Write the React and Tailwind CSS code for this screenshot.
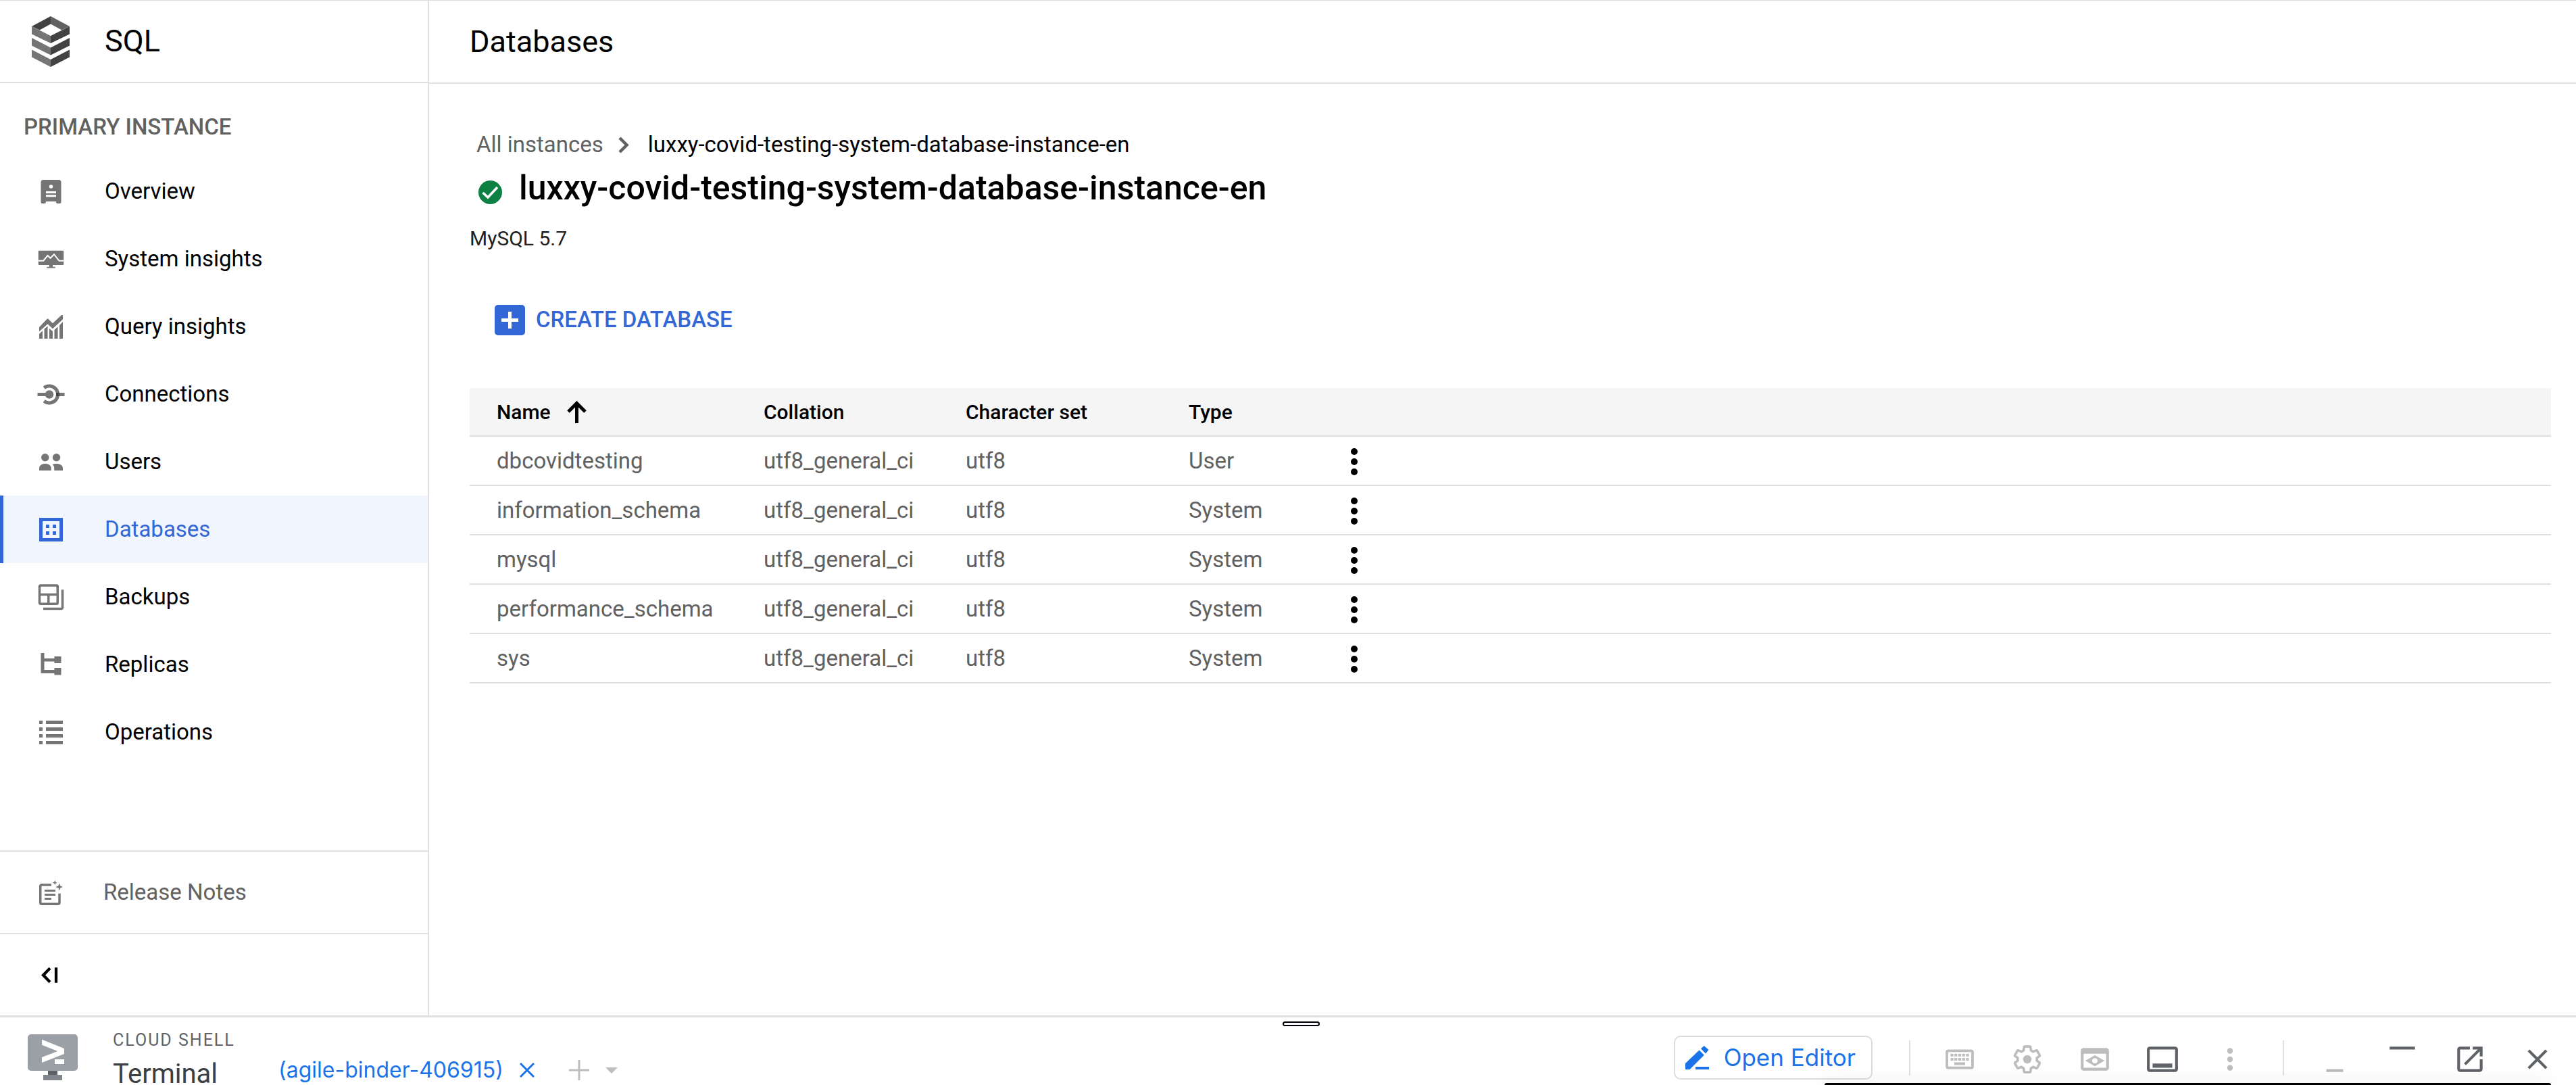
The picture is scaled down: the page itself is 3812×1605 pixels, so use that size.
import React from "react";

/* ---------- sidebar icons (18-unit grid) ---------- */

function Icon18({ className = "", children }) {
  return (
    <svg viewBox="0 0 18 18" className={`size-[45px] shrink-0 ${className}`} fill="currentColor" aria-hidden="true">
      {children}
    </svg>
  );
}

const OverviewIcon = () => (
  <Icon18>
    <path fillRule="evenodd" d="M4.5 2h9A1.5 1.5 0 0 1 15 3.500V15.200a.8 .8 0 0 1-.8 .8h-1.400a.8 .8 0 0 1-.8-.8v-.4H6v.4a.8 .8 0 0 1-.8 .8H3.800a.8 .8 0 0 1-.8-.8V3.500A1.500 1.500 0 0 1 4.500 2zM9 4.900a1.100 1.100 0 1 0 0 2.200 1.100 1.100 0 0 0 0-2.200zM6 8.800V10h6V8.800zM6 10.900v1.200h6v-1.200z" />
  </Icon18>
);

const SystemInsightsIcon = () => (
  <Icon18>
    <rect x="1.500" y="3.900" width="15" height="8.500" rx=".5" />
    <path d="M8 12.400h2v1.100h1.500v.7h-5v-.7H8z" />
    <path d="M1.500 9.900h3L7 6.800l1.600 1.500 2.200-2.200 3 3.800h2.700" fill="none" stroke="#fff" strokeWidth=".8" />
  </Icon18>
);

const QueryInsightsIcon = () => (
  <Icon18>
    <path d="M2 9.200 7 4l3 2.900L15.200 2h.8v2.500L10 10.100 7 7.300 2 11.800z" />
    <path d="M2 13.200l2-1.900V16H2zM5 10.300l2-1.800V16H5zM8 10l2 1.600V16H8zM11 10.800l2-1.900V16h-2zM14 8l2-2v10h-2z" />
  </Icon18>
);

const ConnectionsIcon = () => (
  <Icon18>
    <circle cx="8" cy="9" r="2.500" />
    <path d="M1 8h5v2H1zM12 8h5v2h-5z" />
    <path d="M4.900 5.100A5 5 0 1 1 4.900 12.900" fill="none" stroke="currentColor" strokeWidth="2" />
    <path d="M12 8h2v2h-2z" fill="#424242" />
  </Icon18>
);

const UsersIcon = () => (
  <Icon18>
    <circle cx="5.500" cy="6.300" r="2.300" />
    <circle cx="12.200" cy="6.300" r="2.300" />
    <path d="M2 14v-1.300C2 10.900 3.700 10 5.600 10s3.500 .9 3.500 2.700V14z" />
    <path d="M10.900 14v-1.400c0-.9-.4-1.600-1-2.200 .7-.3 1.500-.4 2.300-.4 2.100 0 3.800 .9 3.800 2.700V14z" />
  </Icon18>
);

const DatabasesIcon = () => (
  <Icon18>
    <path fillRule="evenodd" d="M2 2h14v14H2zM4 4v10h10V4z" />
    <path d="M6 6h2v2H6zM10 6h2v2h-2zM6 10h2v2H6zM10 10h2v2h-2z" />
  </Icon18>
);

const BackupsIcon = () => (
  <Icon18>
    <g fill="none" stroke="currentColor" strokeWidth="1.400">
      <rect x="2.200" y="2" width="10.700" height="10.900" rx=".6" />
      <path d="M2.200 7.400h10.700M7.500 7.400v5.500" />
      <path d="M15.800 4.500v10.600a.7 .7 0 0 1-.7 .7H4.400" />
    </g>
  </Icon18>
);

const ReplicasIcon = () => (
  <Icon18>
    <path d="M3 2h2v3.200h6V4h4v4h-4V7H5v5h6v-1.200h4V15h-4v-1H3z" />
  </Icon18>
);

const OperationsIcon = () => (
  <Icon18>
    <path d="M2 2h2v2H2zM6 2h10v2H6zM2 6h2v2H2zM6 6h10v2H6zM2 10h2v2H2zM6 10h10v2H6zM2 14h2v2H2zM6 14h10v2H6z" />
  </Icon18>
);

const ReleaseNotesIcon = () => (
  <Icon18>
    <path d="M9.200 4.400H3.400a.7 .7 0 0 0-.7 .7v9.900a.7 .7 0 0 0 .7 .7h9.900a.7 .7 0 0 0 .7-.7V9.500" fill="none" stroke="currentColor" strokeWidth="1.400" />
    <path d="M5.200 7.200h6.400v1.200H5.200zM5.200 9.600h6.400v1.200H5.200zM5.200 12h4v1.200h-4z" />
    <path d="M11.300 1.700l.4 1 1 .4-1 .4-.4 1-.4-1-1-.4 1-.4zM13.900 3.400l.6 1.600 1.600 .6-1.600 .6-.6 1.600-.6-1.600-1.600-.6 1.600-.6z" />
  </Icon18>
);

const CollapseIcon = () => (
  <Icon18 className="text-black">
    <path d="M8.400 4.900 4.400 9l4 4.100M12 4.500v9" fill="none" stroke="currentColor" strokeWidth="1.700" />
  </Icon18>
);

const SqlLogo = () => (
  <svg viewBox="0 0 56 75" className="h-[75px] w-[56px] shrink-0" aria-hidden="true">
    <path fill="#424242" d="M28 0 0 15l11.500 5.500L28 11.500z" />
    <path fill="#616161" d="M28 0l28 15-11.500 5.500L28 11.500z" />
    <path fill="#757575" d="M0 15l28 14v11L0 26.500zM0 32l28 14.500v11L0 43.500zM0 49.500 28 64v11L0 60.500z" />
    <path fill="#424242" d="M56 15 28 29v11l28-13.500zM56 32 28 46.500v11l28-14zM56 49.500 28 64v11l28-14.500z" />
  </svg>
);

/* ---------- Cloud Shell icons (24-unit grid) ---------- */

function Icon24({ className = "", children }) {
  return (
    <svg viewBox="0 0 24 24" className={`size-[50px] ${className}`} fill="currentColor" aria-hidden="true">
      {children}
    </svg>
  );
}

const KeyboardIcon = () => (
  <Icon24>
    <rect x="2.900" y="5.900" width="18.200" height="12.200" rx="1" fill="none" stroke="currentColor" strokeWidth="1.800" />
    <path d="M5.500 8h2v2h-2zM8.250 8h2v2h-2zM11 8h2v2h-2zM13.750 8h2v2h-2zM16.500 8h2v2h-2zM5.500 11h2v2h-2zM8.250 11h2v2h-2zM11 11h2v2h-2zM13.750 11h2v2h-2zM16.500 11h2v2h-2zM8.200 14.200h7.600v1.900H8.200z" />
  </Icon24>
);

const GearIcon = () => (
  <Icon24>
    <path
      transform="translate(1.080 1.080) scale(.91)"
      fill="none"
      stroke="currentColor"
      strokeWidth="1.900"
      d="M19.430 12.980c.04-.32.07-.64.07-.98 0-.34-.03-.66-.07-.98l2.110-1.650c.19-.15.24-.42.12-.64l-2-3.460c-.09-.16-.26-.25-.44-.25-.06 0-.12.01-.17.03l-2.490 1c-.52-.4-1.080-.73-1.690-.98l-.38-2.650C14.460 2.180 14.250 2 14 2h-4c-.25 0-.46.18-.49.42l-.38 2.650c-.61.25-1.170.59-1.690.98l-2.490-1c-.06-.02-.12-.03-.18-.03-.17 0-.34.09-.43.25l-2 3.460c-.13.22-.07.49.12.64l2.110 1.650c-.04.32-.07.65-.07.98 0 .33.03.66.07.98l-2.110 1.650c-.19.15-.24.42-.12.64l2 3.460c.09.16.26.25.44.25.06 0 .12-.01.17-.03l2.490-1c.52.4 1.080.73 1.690.98l.38 2.650c.03.24.24.42.49.42h4c.25 0 .46-.18.49-.42l.38-2.650c.61-.25 1.170-.59 1.690-.98l2.490 1c.06.02.12.03.18.03.17 0 .34-.09.43-.25l2-3.460c.12-.22.07-.49-.12-.64l-2.110-1.650z"
    />
    <circle cx="12" cy="12" r="3" />
  </Icon24>
);

const PreviewIcon = () => (
  <Icon24>
    <path fillRule="evenodd" d="M4 4h16a2 2 0 0 1 2 2v12a2 2 0 0 1-2 2H4a2 2 0 0 1-2-2V6a2 2 0 0 1 2-2zM4 8v10h16V8z" />
    <path fillRule="evenodd" d="M12 9.100 18.900 13 12 16.900 5.200 13zM12 11.100a1.900 1.900 0 1 0 0 3.800 1.900 1.900 0 0 0 0-3.800z" />
  </Icon24>
);

const PanelIcon = () => (
  <Icon24>
    <rect x="2" y="4" width="20" height="16" rx="1" fill="none" stroke="currentColor" strokeWidth="2" />
    <path d="M5 15h14v3H5z" />
  </Icon24>
);

const DotsIcon = ({ className }) => (
  <Icon24 className={className}>
    <circle cx="12" cy="6" r="2" />
    <circle cx="12" cy="12" r="2" />
    <circle cx="12" cy="18" r="2" />
  </Icon24>
);

const MinimizeIcon = () => (
  <Icon24>
    <path d="M6 19h12v2H6z" />
  </Icon24>
);

const MaximizeIcon = () => (
  <Icon24>
    <path d="M3 3h18v2H3z" />
  </Icon24>
);

const OpenNewIcon = () => (
  <Icon24>
    <path d="M19 19H5V5h7V3H5c-1.110 0-2 .9-2 2v14c0 1.100.89 2 2 2h14c1.100 0 2-.9 2-2v-7h-2v7zM14 3v2h3.590l-9.830 9.830 1.410 1.410L19 6.410V10h2V3h-7z" />
  </Icon24>
);

const CloseIcon = () => (
  <Icon24>
    <path d="M19 6.410L17.590 5 12 10.590 6.410 5 5 6.410 10.590 12 5 17.590 6.410 19 12 13.410 17.590 19 19 17.590 13.410 12z" />
  </Icon24>
);

const ShellLogo = () => (
  <svg viewBox="0 0 74 68" className="h-[68px] w-[74px] shrink-0" aria-hidden="true">
    <rect width="74" height="54" rx="5" fill="#9aa0a6" />
    <path fill="#5f6368" d="M30 54h14v6H30z" />
    <path fill="#80868b" d="M23 60h28v8H23z" />
    <path fill="#fff" d="M21 7.700 54 21v8L21 42v-8l23.300-9L21 15.700zM40 37h14v7H40z" />
  </svg>
);

/* ---------- data ---------- */

const NAV = [
  { label: "Overview", Icon: OverviewIcon },
  { label: "System insights", Icon: SystemInsightsIcon },
  { label: "Query insights", Icon: QueryInsightsIcon },
  { label: "Connections", Icon: ConnectionsIcon },
  { label: "Users", Icon: UsersIcon },
  { label: "Databases", Icon: DatabasesIcon, active: true },
  { label: "Backups", Icon: BackupsIcon },
  { label: "Replicas", Icon: ReplicasIcon },
  { label: "Operations", Icon: OperationsIcon },
];

const ROWS = [
  { name: "dbcovidtesting", type: "User" },
  { name: "information_schema", type: "System" },
  { name: "mysql", type: "System" },
  { name: "performance_schema", type: "System" },
  { name: "sys", type: "System" },
];

const INSTANCE = "luxxy-covid-testing-system-database-instance-en";

/* ---------- layout ---------- */

function Sidebar() {
  return (
    <aside className="flex w-[635px] shrink-0 flex-col border-r-2 border-[#e0e0e0]">
      <div className="flex h-[122px] shrink-0 items-center gap-[52px] border-b-2 border-[#e0e0e0] pl-[47px]">
        <SqlLogo />
        <span className="text-[45px]">SQL</span>
      </div>
      <h2 className="pt-[45px] pb-[25px] pl-[35px] text-[33px] leading-[40px] font-medium text-[#616161]">PRIMARY INSTANCE</h2>
      <nav>
        {NAV.map(({ label, Icon, active }) => (
          <a
            key={label}
            href="#"
            aria-current={active ? "page" : undefined}
            className={`flex h-[100px] items-center gap-[57px] border-l-[5px] pl-12 text-[33px] ${
              active ? "border-[#3367d6] bg-[#f0f5fe] text-[#3367d6]" : "border-transparent text-black"
            }`}
          >
            <span className={active ? "text-[#3367d6]" : "text-[#757575]"}>
              <Icon />
            </span>
            {label}
          </a>
        ))}
      </nav>
      <a
        href="#"
        className="mt-auto flex h-[122px] shrink-0 items-center gap-[55px] border-t-2 border-[#e0e0e0] pl-[53px] text-[33px] text-[#616161]"
      >
        <span className="text-[#757575]">
          <ReleaseNotesIcon />
        </span>
        Release Notes
      </a>
      <button type="button" aria-label="Collapse menu" className="flex h-[122px] shrink-0 items-center border-t-2 border-[#e0e0e0] pl-[53px]">
        <CollapseIcon />
      </button>
    </aside>
  );
}

function DatabaseTable() {
  return (
    <table className="mt-14 w-full table-fixed border-separate border-spacing-0 text-left">
      <colgroup>
        <col className="w-[435px]" />
        <col className="w-[299px]" />
        <col className="w-[330px]" />
        <col className="w-[215px]" />
        <col />
      </colgroup>
      <thead>
        <tr className="text-[30px] [&>th]:h-[72px] [&>th]:border-b-2 [&>th]:border-[#e0e0e0] [&>th]:bg-[#f5f5f5] [&>th]:p-0 [&>th]:font-medium">
          <th aria-sort="ascending">
            <button type="button" className="flex items-center gap-6 pl-10 font-medium">
              Name
              <svg viewBox="0 0 29 33" className="h-[33px] w-[29px]" fill="none" stroke="currentColor" strokeWidth="5" aria-hidden="true">
                <path d="M14.500 33V4M2 16 14.500 3.500 27 16" />
              </svg>
            </button>
          </th>
          <th>Collation</th>
          <th>Character set</th>
          <th>Type</th>
          <th aria-label="Actions" />
        </tr>
      </thead>
      <tbody>
        {ROWS.map((row) => (
          <tr
            key={row.name}
            className="text-[33px] text-[#616161] [&>td]:h-[73px] [&>td]:border-b-2 [&>td]:border-[#e0e0e0] [&>td]:p-0"
          >
            <td>
              <span className="pl-10">{row.name}</span>
            </td>
            <td>utf8_general_ci</td>
            <td>utf8</td>
            <td>{row.type}</td>
            <td>
              <button type="button" aria-label={`Actions for ${row.name}`} className="flex pt-[3px] text-black">
                <DotsIcon className="size-[60px]!" />
              </button>
            </td>
          </tr>
        ))}
      </tbody>
    </table>
  );
}

function Main() {
  return (
    <main className="min-w-0 flex-1">
      <header className="flex h-[123px] items-center border-b-2 border-[#e0e0e0] pl-[60px]">
        <h1 className="text-[45px]">Databases</h1>
      </header>
      <div className="pt-[70px] pr-[37px] pl-[60px]">
        <nav aria-label="Breadcrumb" className="flex items-center pl-[10px] text-[33px] leading-[40px]">
          <a href="#" className="text-[#616161]">
            All instances
          </a>
          <svg viewBox="0 0 16 25" className="mr-7 ml-[22px] h-[25px] w-[16px]" fill="none" stroke="#616161" strokeWidth="4.500" aria-hidden="true">
            <path d="M2 2l10.500 10.500L2 23" />
          </svg>
          <span>{INSTANCE}</span>
        </nav>
        <div className="mt-[15px] flex items-end gap-5 pl-2">
          <svg viewBox="0 0 45 45" className="size-[45px] shrink-0" aria-label="Running">
            <circle cx="22.500" cy="22.500" r="17.500" fill="#0d8043" />
            <path d="M11.500 23l7.500 7 14-15" fill="none" stroke="#fff" strokeWidth="3.500" />
          </svg>
          <h2 className="text-[50px] leading-[58px] font-medium">{INSTANCE}</h2>
        </div>
        <p className="mt-[26px] text-[30px] leading-[40px] text-[#212121]">MySQL 5.7</p>
        <button type="button" className="mt-[55px] flex h-[90px] items-center gap-4 px-[37px] text-[33px] font-medium text-[#3367d6]">
          <svg viewBox="0 0 45 45" className="size-[45px]" aria-hidden="true">
            <rect width="45" height="45" rx="5" fill="#3367d6" />
            <path d="M22.500 10v25M10 22.500h25" stroke="#fff" strokeWidth="5" />
          </svg>
          CREATE DATABASE
        </button>
        <DatabaseTable />
      </div>
    </main>
  );
}

function ToolButton({ label, Icon, muted }) {
  return (
    <button
      type="button"
      aria-label={label}
      className={`flex w-[100px] items-center justify-center ${muted ? "text-[#bdbdbd]" : "text-[#5f6368]"}`}
    >
      <Icon />
    </button>
  );
}

function CloudShell() {
  return (
    <footer className="relative flex h-[103px] shrink-0 overflow-hidden border-t-[3px] border-[#e0e0e0] pl-[41px]">
      <div className="absolute top-1.5 left-1/2 h-[7px] w-[55px] -translate-x-[8px] rounded-full border-2 border-black bg-[#f8faff]" />
      <div className="pt-[25px]">
        <ShellLogo />
      </div>
      <div className="ml-[52px] w-[245px] pt-[19px]">
        <div className="text-[25px] leading-[30px] tracking-[2px] text-[#5f6368]">CLOUD SHELL</div>
        <div className="mt-5 text-[40px] leading-[30px] text-[#3c4043]">Terminal</div>
      </div>
      <div className="flex h-[44px] items-center self-end">
        <a href="#" className="font-['Inter',sans-serif] text-[32px] text-[#1a73e8]">
          (agile-binder-406915)
        </a>
        <button type="button" aria-label="Close tab" className="ml-6 text-[#1a73e8]">
          <svg viewBox="0 0 22 22" className="size-[22px]" fill="none" stroke="currentColor" strokeWidth="3" aria-hidden="true">
            <path d="M1 1l20 20M21 1 1 21" />
          </svg>
        </button>
        <button type="button" aria-label="Open a new tab" className="ml-[51px] text-[#bdbdbd]">
          <svg viewBox="0 0 30 30" className="size-[30px]" fill="none" stroke="currentColor" strokeWidth="3" aria-hidden="true">
            <path d="M15 0v30M0 15h30" />
          </svg>
        </button>
        <button type="button" aria-label="Choose project" className="ml-6 text-[#bdbdbd]">
          <svg viewBox="0 0 18 9" className="h-[9px] w-[18px]" fill="currentColor" aria-hidden="true">
            <path d="M0 0h18L9 9z" />
          </svg>
        </button>
      </div>
      <div className="mt-[27px] ml-auto flex h-[65px] items-center pr-[7px]">
        <button
          type="button"
          className="flex h-[65px] items-center gap-[22px] rounded-[10px] border-2 border-[#dadce0] pr-[23px] pl-[15px] font-['Inter',sans-serif] text-[35px] text-[#1a73e8]"
        >
          <svg viewBox="0 0 35 35" className="size-[35px]" fill="currentColor" aria-hidden="true">
            <path d="M0 35v-9L20.500 6.500l7.300 7.300L6.500 35zM27.700 0 34.500 6l-4.500 5.500-7-7.200zM15 31h20v4H15z" />
          </svg>
          Open Editor
        </button>
        <div className="mr-[23px] ml-[54px] h-[52px] w-[2px] bg-[#e0e0e0]" />
        <div className="flex pt-[5px]">
          <ToolButton label="Keyboard" Icon={KeyboardIcon} muted />
          <ToolButton label="Settings" Icon={GearIcon} muted />
          <ToolButton label="Web preview" Icon={PreviewIcon} muted />
          <ToolButton label="Session information" Icon={PanelIcon} />
          <ToolButton label="More" Icon={DotsIcon} muted />
        </div>
        <div className="mr-[25px] ml-[28px] h-[52px] w-[2px] bg-[#e0e0e0]" />
        <div className="flex pt-[5px]">
          <ToolButton label="Minimize" Icon={MinimizeIcon} muted />
          <ToolButton label="Maximize" Icon={MaximizeIcon} />
          <ToolButton label="Open in new window" Icon={OpenNewIcon} />
          <ToolButton label="Close" Icon={CloseIcon} />
        </div>
      </div>
      <div className="absolute right-[37px] bottom-0 h-[3px] w-[1075px] rounded-t-[5px] bg-black shadow-[0_0_25px_rgba(0,0,0,0.25)]" />
    </footer>
  );
}

export default function App() {
  return (
    <div className="flex h-screen flex-col overflow-hidden border-t border-[#dadce0] bg-white font-['Roboto',sans-serif] text-black">
      <div className="flex min-h-0 flex-1">
        <Sidebar />
        <Main />
      </div>
      <CloudShell />
    </div>
  );
}
